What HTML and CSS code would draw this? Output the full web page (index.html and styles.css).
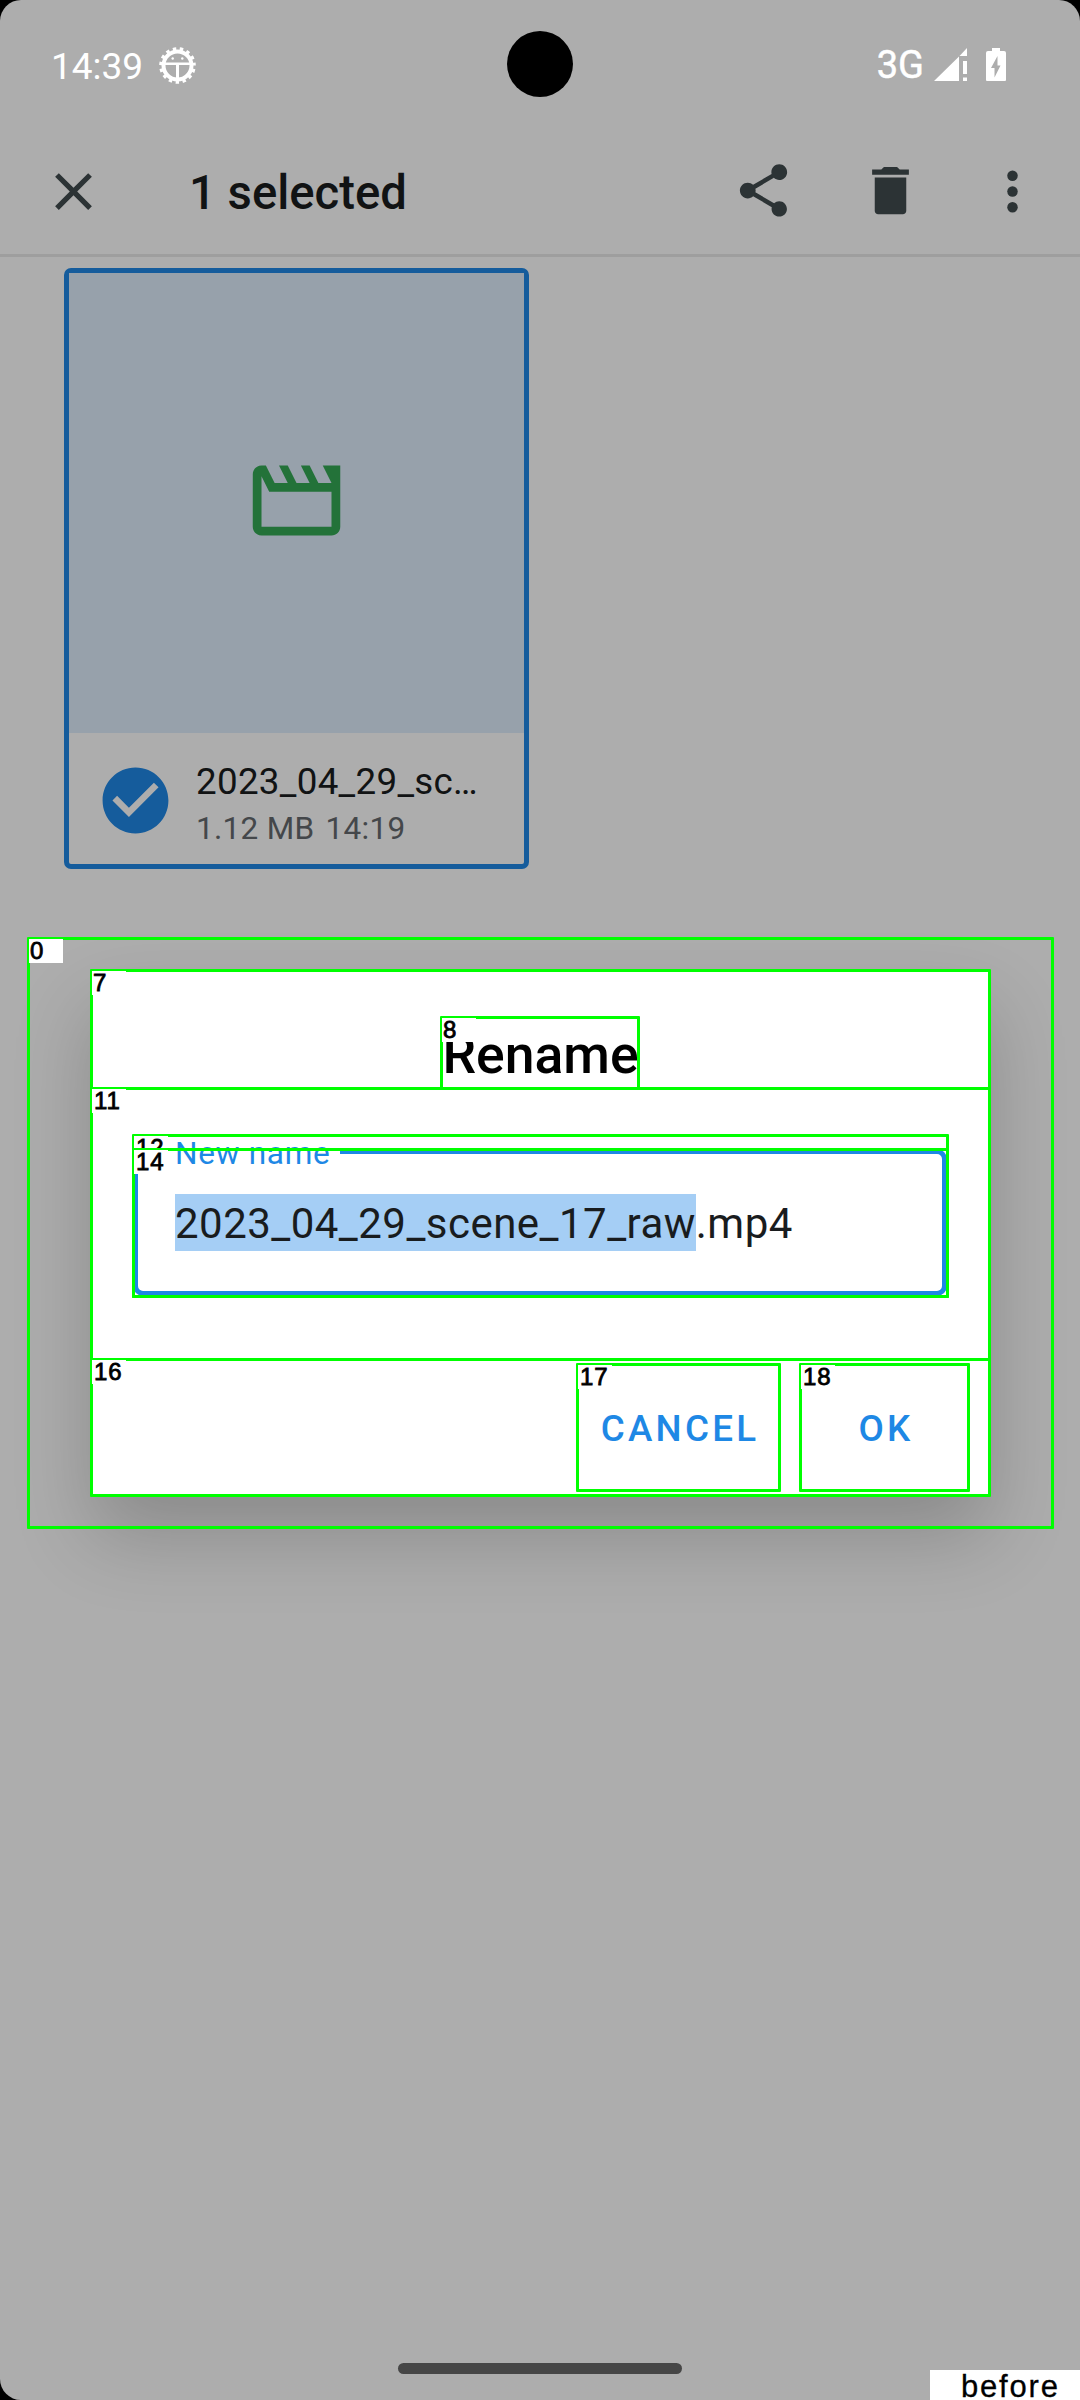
FILE: index.html
```html
<!DOCTYPE html>
<html lang="en">
<head>
<meta charset="utf-8">
<title>Rename</title>
<link rel="stylesheet" href="styles.css">
</head>
<body>
<div class="device">
  <div class="screen">
    <header class="status">
      <span class="clock">14:39</span>
      <svg class="gear" viewBox="-18.5 -18.5 37 37">
        <circle r="14" fill="none" stroke="#fff" stroke-width="4"/>
        <circle r="16.600" fill="none" stroke="#fff" stroke-width="3.400" stroke-dasharray="3.400 3.554" stroke-dashoffset="-3.500"/>
        <path d="M-13-3H13V-.4H-13zM-1.500-1H1.500V13H-1.500z" fill="#fff"/>
        <circle cx="-4.800" cy="-7" r="1.200" fill="#fff"/><circle cx="4.800" cy="-7" r="1.200" fill="#fff"/>
      </svg>
      <span class="network">3G</span>
      <svg class="signal" viewBox="0 0 33 33"><path d="M0 33L25 8.500V33zM25.500 8L33 0V8zM29 13h4v13h-4zM29 29.500h4V33h-4z" fill="#fff"/></svg>
      <svg class="battery" viewBox="0 0 20 33"><path fill-rule="evenodd" d="M6 0h8v3h4q2 0 2 2v27q0 1-1 1H1q-1 0-1-1V5q0-2 2-2h4zM11.500 8L5 20h3.500v9.500L14.500 17.500h-3z" fill="#fff"/></svg>
    </header>
    <div class="camera"></div>
    <nav class="toolbar">
      <svg class="icon close" viewBox="0 0 24 24"><path d="M19 6.410L17.590 5 12 10.590 6.410 5 5 6.410 10.590 12 5 17.590 6.410 19 12 13.410 17.590 19 19 17.590 13.410 12z"/></svg>
      <h1 class="count">1 selected</h1>
      <svg class="icon share" viewBox="0 0 24 24"><path d="M18 16.080c-.76 0-1.440.3-1.960.77L8.910 12.700c.05-.23.09-.46.09-.7s-.04-.47-.09-.7l7.050-4.110c.54.5 1.250.81 2.040.81 1.660 0 3-1.340 3-3s-1.340-3-3-3-3 1.340-3 3c0 .24.04.47.09.7L8.040 9.810C7.500 9.310 6.790 9 6 9c-1.660 0-3 1.340-3 3s1.340 3 3 3c.79 0 1.500-.31 2.040-.81l7.120 4.160c-.05.21-.08.43-.08.65 0 1.610 1.310 2.920 2.920 2.920s2.920-1.310 2.920-2.920-1.310-2.920-2.920-2.920z"/></svg>
      <svg class="icon trash" viewBox="0 0 24 24"><path d="M6 19.800c0 .7.600 1.200 1.300 1.200h9.400c.7 0 1.300-.5 1.300-1.200V7H6v12.800zM19 4h-3.500l-1-1h-5l-1 1H5v2h14V4z"/></svg>
      <svg class="icon more" viewBox="0 0 24 24"><circle cx="12" cy="6" r="2"/><circle cx="12" cy="12" r="2"/><circle cx="12" cy="18" r="2"/></svg>
    </nav>
    <main class="files">
      <article class="card">
        <div class="thumb">
          <svg class="movie" viewBox="0 0 24 24"><path d="M4 6.470L5.760 10H20v8H4V6.470M22 4h-4l2 4h-3l-2-4h-2l2 4h-3l-2-4H8l2 4H7L5 4H4c-1.100 0-1.990.9-1.990 2L2 18c0 1.100.9 2 2 2h16c1.100 0 2-.9 2-2V4z"/></svg>
        </div>
        <div class="meta">
          <svg class="check" viewBox="0 0 24 24"><path d="M12 2C6.480 2 2 6.480 2 12s4.480 10 10 10 10-4.480 10-10S17.520 2 12 2zm-2 15l-5-5 1.410-1.410L10 14.170l7.590-7.590L19 8l-9 9z"/></svg>
          <div class="lines">
            <div class="filename">2023_04_29_sc…</div>
            <div class="detail"><span>1.12 MB</span><span>14:19</span></div>
          </div>
        </div>
      </article>
    </main>
    <footer class="gesture"><div class="pill"></div></footer>
  </div>

  <section class="dialog">
    <h2 class="title">Rename</h2>
    <div class="body">
      <div class="field">
        <span class="label">New name</span>
        <div class="value"><span class="selected">2023_04_29_scene_17_raw</span><span class="rest">.mp4</span></div>
      </div>
    </div>
    <div class="actions"><button class="btn cancel">CANCEL</button><button class="btn ok">OK</button></div>
  </section>

  <div class="box b0"><span class="tag">0</span></div>
  <div class="box b7"><span class="tag">7</span></div>
  <div class="box b8"><span class="tag">8</span></div>
  <div class="box b11"><span class="tag wide">11</span></div>
  <div class="box b12"><span class="tag wide">12</span></div>
  <div class="box b14"><span class="tag wide">14</span></div>
  <div class="box b16"><span class="tag wide">16</span></div>
  <div class="box b17"><span class="tag wide">17</span></div>
  <div class="box b18"><span class="tag wide">18</span></div>
  <div class="caption">before</div>
</div>
</body>
</html>
```
FILE: styles.css
```css
* { box-sizing: border-box; }
body { margin: 0; background: #000; font-family: Roboto, sans-serif; }
h1, h2 { margin: 0; font-weight: 500; }
svg { display: block; flex: none; }
.device { position: relative; width: 1080px; height: 2400px; overflow: hidden; background: #000; }
.screen { display: flex; flex-direction: column; height: 2400px; background: #adadad; border-radius: 21px; overflow: hidden; }

.status { display: flex; align-items: center; height: 128px; padding: 0 74px 0 51px; color: #fff; }
.clock { font-size: 37px; line-height: 44px; margin-top: 5px; }
.gear { width: 37px; height: 37px; margin: 2px auto 0 16px; }
.network { font-size: 38px; line-height: 44px; margin-right: 10px; margin-top: 1px; -webkit-text-stroke: .5px #fff; }
.signal { width: 33px; height: 33px; margin-right: 19px; }
.battery { width: 20px; height: 33px; }
.camera { position: absolute; left: 507px; top: 31px; width: 66px; height: 66px; border-radius: 50%; background: #000; }

.toolbar { display: flex; align-items: center; height: 126px; padding: 0 36px 0 42px; }
.icon { width: 63px; height: 63px; fill: #2c3335; }
.count { margin: 3px auto 0 84px; font-size: 47.25px; line-height: 56px; color: #111314; }
.share { margin-right: 64px; }
.trash { margin-right: 59px; }
.share, .trash { margin-top: -1px; }

.files { flex: 1; padding: 11px 64px; border-top: 3px solid #9e9e9e; }
.card { width: 465px; height: 601px; border: 5px solid #155c9c; border-radius: 7px; }
.thumb { display: flex; align-items: center; justify-content: center; height: 460px; padding-bottom: 5px; background: #97a1ab; }
.movie { width: 105px; height: 105px; fill: #237239; }
.meta { display: flex; padding: 28px 0 0 27px; }
.check { width: 79px; height: 79px; fill: #155c9c; }
.lines { margin-left: 21px; }
.filename { font-size: 36.75px; line-height: 44px; letter-spacing: .3px; color: #111314; margin-top: -1px; }
.detail { display: flex; gap: 11px; font-size: 31.5px; line-height: 38px; letter-spacing: .3px; color: #44474a; margin-top: 6px; }

.gesture { display: flex; justify-content: center; height: 37px; }
.pill { width: 284px; height: 11px; border-radius: 5.5px; background: #464646; }

.dialog { position: absolute; left: 91px; top: 970px; width: 899px; height: 526px; padding-top: 49px; border-radius: 4px; background: #fff; box-shadow: 0 40px 80px rgba(0, 0, 0, .2); }
.title { height: 70px; text-align: center; font-size: 53.5px; line-height: 71px; color: #000; }
.body { height: 270px; padding: 60px 43px 0 42px; }
.field { position: relative; height: 147px; padding-top: 40px; padding-left: 37px; border: 5px solid #1e88e5; border-radius: 10px; }
.label { position: absolute; left: 29px; top: -19px; width: 173px; padding-left: 8px; background: #fff; color: #1e88e5; font-size: 31.5px; line-height: 38px; letter-spacing: .75px; white-space: nowrap; }
.value { display: flex; font-size: 42px; line-height: 55px; letter-spacing: .47px; color: #191c1e; white-space: nowrap; }
.selected { background: #a5cef5; }
.selected, .rest { padding-top: 2px; }
.actions { display: flex; justify-content: flex-end; gap: 20px; padding: 5px 21px 0; }
.btn { height: 127px; padding: 3px 0 0 3px; border: 0; background: none; color: #1e88e5; font: 500 36.75px/44px Roboto, sans-serif; letter-spacing: 3.28px; text-align: center; }
.cancel { width: 203px; }
.ok { width: 169px; }

/* element bounds overlay */
.box { position: absolute; border: 3px solid #0f0; border-radius: 1px; }
.tag { position: absolute; left: -1px; top: -1px; width: 34px; height: 24px; padding-left: 1px; background: #fff; color: #000; font: 500 24px/24px "Liberation Sans", sans-serif; -webkit-text-stroke: .8px #000; }
.wide { padding-left: 2px; letter-spacing: 1px; }
.b0 { left: 27px; top: 937px; width: 1027px; height: 592px; }
.b7 { left: 90px; top: 969px; width: 901px; height: 121px; }
.b8 { left: 440px; top: 1016px; width: 200px; height: 74px; }
.b11 { left: 90px; top: 1087px; width: 901px; height: 274px; }
.b12 { left: 132px; top: 1134px; width: 817px; height: 164px; }
.b14 { left: 132px; top: 1148px; width: 817px; height: 150px; }
.b16 { left: 90px; top: 1358px; width: 901px; height: 139px; }
.b17 { left: 576px; top: 1363px; width: 205px; height: 129px; }
.b18 { left: 799px; top: 1363px; width: 171px; height: 129px; }
.caption { position: absolute; right: 0; bottom: 0; width: 150px; height: 30px; padding-left: 31px; background: #fff; color: #000; font: 31px/33px "Liberation Sans", sans-serif; letter-spacing: 1.8px; -webkit-text-stroke: .3px #000; }
```
